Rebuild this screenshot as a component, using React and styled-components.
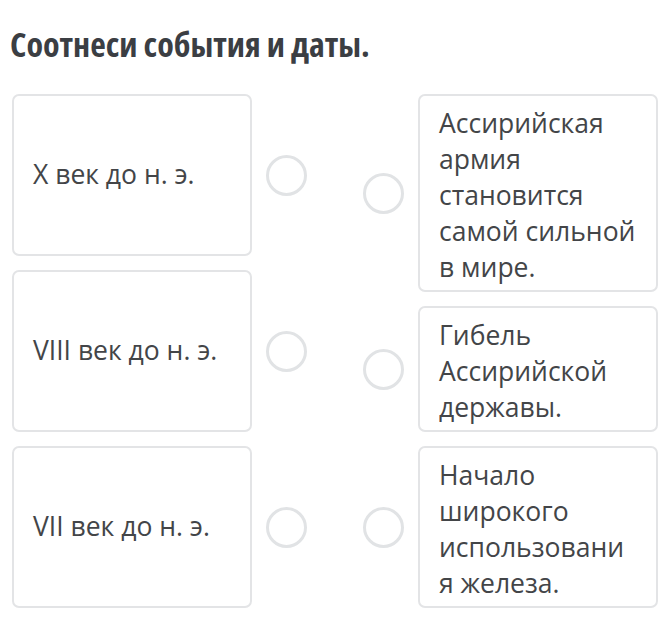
import React from "react";
import styled, { createGlobalStyle } from "styled-components";

const GlobalStyle = createGlobalStyle`
  body {
    margin: 0;
    background: #ffffff;
    font-family: "Open Sans", "Noto Sans", sans-serif;
  }
`;

const Page = styled.div`
  width: 670px;
  height: 642px;
  padding: 22px 12px 0 12px;
  box-sizing: border-box;
  overflow: hidden;
`;

const Title = styled.h1`
  margin: 0 0 28px -2px;
  font-size: 34px;
  line-height: 44px;
  font-weight: 700;
  font-stretch: 75%;
  color: #3b3e43;
`;

const Board = styled.div`
  display: flex;
  justify-content: space-between;
`;

const Column = styled.div`
  display: flex;
  flex-direction: column;
  gap: 14px;
`;

const Row = styled.div`
  display: flex;
  align-items: center;
  gap: 14px;
`;

const Card = styled.div`
  width: 240px;
  box-sizing: border-box;
  border: 2px solid #e3e4e6;
  border-radius: 7px;
  background: #fff;
  color: #434548;
  font-size: 26.5px;
  line-height: 36px;
  padding: ${(p) => (p.$left ? "0 12px 2px 19px" : "9px 14px 5px 19px")};
  height: ${(p) => (p.$left ? "162px" : "auto")};
  display: flex;
  align-items: ${(p) => (p.$left ? "center" : "flex-start")};
`;

const Dot = styled.div`
  width: 41px;
  height: 41px;
  box-sizing: border-box;
  border: 3px solid #e1e3e5;
  border-radius: 50%;
  flex-shrink: 0;
`;

const dates = ["X век до н. э.", "VIII век до н. э.", "VII век до н. э."];
const events = [
  "Ассирийская армия становится самой сильной в мире.",
  "Гибель Ассирийской державы.",
  "Начало широкого использовани я железа.",
];

export default function App() {
  return (
    <>
      <GlobalStyle />
      <Page>
        <Title>Соотнеси события и даты.</Title>
        <Board>
          <Column>
            {dates.map((d) => (
              <Row key={d}>
                <Card $left>{d}</Card>
                <Dot />
              </Row>
            ))}
          </Column>
          <Column>
            {events.map((e) => (
              <Row key={e}>
                <Dot />
                <Card>{e}</Card>
              </Row>
            ))}
          </Column>
        </Board>
      </Page>
    </>
  );
}
